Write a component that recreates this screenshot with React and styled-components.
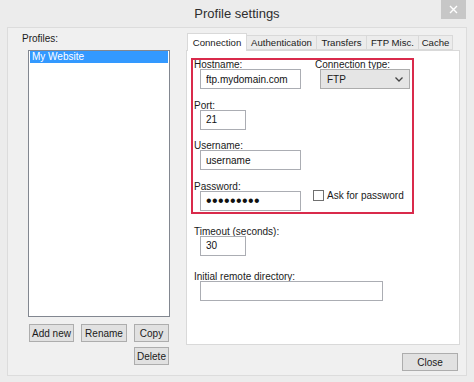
import styled, { createGlobalStyle } from "styled-components";

const GlobalStyle = createGlobalStyle`
  html, body {
    margin: 0;
    padding: 0;
    background: #ececec;
  }
  * {
    box-sizing: border-box;
  }
`;

const Window = styled.div`
  width: 474px;
  height: 382px;
  background: #ececec;
  display: flex;
  flex-direction: column;
  font-family: "Liberation Sans", Arial, sans-serif;
  font-size: 10px;
  color: #1a1a1a;
`;

const TitleBar = styled.div`
  height: 27px;
  display: grid;
  grid-template-columns: 1fr auto 1fr;
  align-items: start;
`;

const Title = styled.div`
  grid-column: 2;
  line-height: 27px;
  font-size: 13px;
  color: #2e2e2e;
`;

const CloseX = styled.div`
  grid-column: 3;
  justify-self: end;
  width: 25px;
  height: 19px;
  margin-right: 8px;
  background: #c7c7c7;
  display: flex;
  align-items: center;
  justify-content: center;
`;

const Client = styled.div`
  flex: 1;
  margin: 0 7px 6px;
  background: #f0f0f0;
  border: 1px solid #dcdcdc;
  display: flex;
  padding: 5px 0 0 14px;
  gap: 16px;
`;

const LeftPane = styled.div`
  width: 148px;
  display: flex;
  flex-direction: column;
`;

const PaneLabel = styled.div`
  line-height: 12px;
`;

const ProfileList = styled.div`
  margin: 5px 0 0 6px;
  width: 142px;
  height: 267px;
  background: #fff;
  border: 1px solid #828790;
  padding: 0 1px;
`;

const ListItem = styled.div`
  height: 12px;
  line-height: 12px;
  padding-left: 2px;
  background: ${(p) => (p.$selected ? "#3399ff" : "transparent")};
  color: ${(p) => (p.$selected ? "#fff" : "#1a1a1a")};
`;

const ButtonGrid = styled.div`
  margin: 7px 0 0 7px;
  display: grid;
  grid-template-columns: 45px 46px 35px;
  column-gap: 7px;
  row-gap: 5px;
`;

const Button = styled.button`
  height: 18px;
  width: ${(p) => p.$width || "auto"};
  grid-column: ${(p) => p.$col || "auto"};
  padding: 0;
  background: #e1e1e1;
  border: 1px solid #adadad;
  font-family: inherit;
  font-size: 10px;
  color: #1a1a1a;
`;

const RightPane = styled.div`
  width: 274px;
  display: flex;
  flex-direction: column;
`;

const TabStrip = styled.div`
  height: 17px;
  display: flex;
  align-items: flex-end;
  padding-left: 1px;
`;

const Tab = styled.div`
  position: relative;
  width: ${(p) => p.$width}px;
  height: ${(p) => (p.$active ? "18px" : "15px")};
  margin-bottom: ${(p) => (p.$active ? "-1px" : "0")};
  margin-left: ${(p) => (p.$active ? "0" : "-1px")};
  line-height: ${(p) => (p.$active ? "17px" : "14px")};
  font-size: 9.6px;
  text-align: center;
  background: ${(p) => (p.$active ? "#fff" : "#ececec")};
  border: 1px solid #d9d9d9;
  border-bottom: ${(p) => (p.$active ? "none" : "1px solid #d9d9d9")};
  z-index: ${(p) => (p.$active ? 1 : 0)};
  white-space: nowrap;
  overflow: hidden;
`;

const TabPanel = styled.div`
  height: 295px;
  background: #fff;
  border: 1px solid #d9d9d9;
  padding: 7px 0 0 4px;
`;

const Highlight = styled.div`
  width: 223px;
  border: 2px solid #d92a4b;
  padding: 1px 0 1px 1px;
  display: flex;
  flex-direction: column;
  gap: 12.5px;
`;

const Row = styled.div`
  display: flex;
  align-items: flex-start;
`;

const Field = styled.div`
  width: ${(p) => p.$width || "auto"};
  display: flex;
  flex-direction: column;
  margin: ${(p) => p.$margin || "0"};
`;

const FieldLabel = styled.div`
  line-height: 8px;
  white-space: nowrap;
`;

const TextBox = styled.input`
  width: ${(p) => p.$width}px;
  height: 20px;
  margin-left: 6px;
  padding: 0 0 0 5px;
  border: 1px solid #abadb3;
  background: #fff;
  font-family: inherit;
  font-size: ${(p) => (p.$secret ? "16px" : "10px")};
  letter-spacing: ${(p) => (p.$secret ? "0.4px" : "0")};
  color: #111;
  outline: none;
`;

const Select = styled.div`
  width: 90px;
  height: 20px;
  margin-left: 5px;
  padding: 0 6px;
  background: #e5e5e5;
  border: 1px solid #acacac;
  display: flex;
  align-items: center;
  justify-content: space-between;
`;

const CheckLine = styled.label`
  margin-top: 7px;
  display: flex;
  align-items: center;
  gap: 3px;
  white-space: nowrap;
`;

const CheckBox = styled.span`
  width: 11px;
  height: 11px;
  background: #fff;
  border: 1px solid #707070;
`;

const Footer = styled.div`
  margin-top: 8px;
  display: flex;
  justify-content: flex-end;
  padding-right: 2px;
`;

const tabs = [
  { name: "Connection", width: 60, active: true },
  { name: "Authentication", width: 71 },
  { name: "Transfers", width: 51 },
  { name: "FTP Misc.", width: 53 },
  { name: "Cache", width: 35 },
];

const App = () => {
  return (
    <>
      <GlobalStyle />
      <Window>
        <TitleBar>
          <Title>Profile settings</Title>
          <CloseX>
            <svg width="9" height="9" viewBox="0 0 9 9">
              <path d="M1 1 L8 8 M8 1 L1 8" stroke="#fff" strokeWidth="1.4" />
            </svg>
          </CloseX>
        </TitleBar>
        <Client>
          <LeftPane>
            <PaneLabel>Profiles:</PaneLabel>
            <ProfileList>
              <ListItem $selected>My Website</ListItem>
            </ProfileList>
            <ButtonGrid>
              <Button>Add new</Button>
              <Button>Rename</Button>
              <Button>Copy</Button>
              <Button $col="3">Delete</Button>
            </ButtonGrid>
          </LeftPane>
          <RightPane>
            <TabStrip>
              {tabs.map((t) => (
                <Tab key={t.name} $active={t.active} $width={t.width}>
                  {t.name}
                </Tab>
              ))}
            </TabStrip>
            <TabPanel>
              <Highlight>
                <Row>
                  <Field $width="121px">
                    <FieldLabel>Hostname:</FieldLabel>
                    <TextBox $width={101} defaultValue="ftp.mydomain.com" readOnly />
                  </Field>
                  <Field>
                    <FieldLabel>Connection type:</FieldLabel>
                    <Select>
                      <span>FTP</span>
                      <svg width="8" height="5" viewBox="0 0 8 5">
                        <path d="M0.5 0.5 L4 4 L7.5 0.5" fill="none" stroke="#444" strokeWidth="1.3" />
                      </svg>
                    </Select>
                  </Field>
                </Row>
                <Field>
                  <FieldLabel>Port:</FieldLabel>
                  <TextBox $width={46} defaultValue="21" readOnly />
                </Field>
                <Field>
                  <FieldLabel>Username:</FieldLabel>
                  <TextBox $width={101} defaultValue="username" readOnly />
                </Field>
                <Row>
                  <Field $width="119px">
                    <FieldLabel>Password:</FieldLabel>
                    <TextBox $width={101} $secret defaultValue={"\u2022".repeat(9)} readOnly />
                  </Field>
                  <CheckLine>
                    <CheckBox />
                    Ask for password
                  </CheckLine>
                </Row>
              </Highlight>
              <Field $margin="14px 0 0 3px">
                <FieldLabel>Timeout (seconds):</FieldLabel>
                <TextBox $width={46} defaultValue="30" readOnly />
              </Field>
              <Field $margin="17.5px 0 0 3px">
                <FieldLabel>Initial remote directory:</FieldLabel>
                <TextBox $width={183} defaultValue="" readOnly />
              </Field>
            </TabPanel>
            <Footer>
              <Button $width="56px">Close</Button>
            </Footer>
          </RightPane>
        </Client>
      </Window>
    </>
  );
};

export default App;
